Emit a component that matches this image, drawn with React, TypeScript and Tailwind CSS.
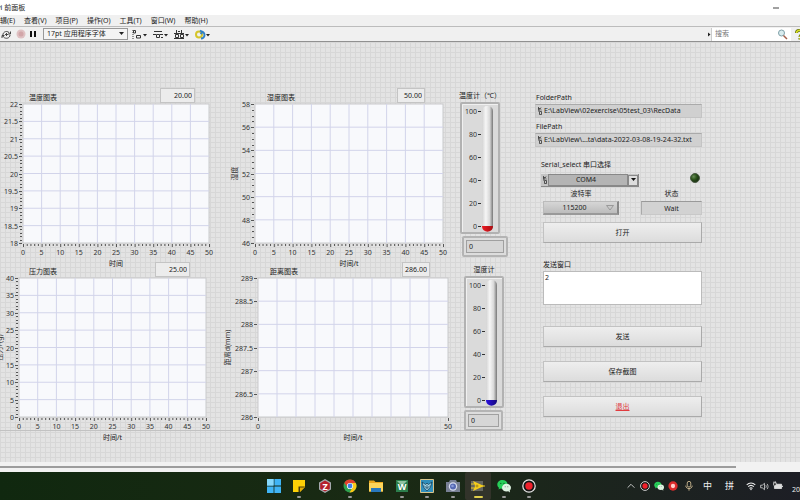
import type { ReactNode } from "react";

type ChartProps = {
  id: string;
  title: string;
  value: string;
  yLabels: string[];
  yMinor: number;
  xLabels: string[];
  xMinor: number;
  xTitle: string;
  yTitle?: string;
  yTitleX?: number;
  className: string;
  titleClass: string;
  valueClass: string;
};

const PLOT_HEIGHT = 139;
const tens = ["0", "5", "10", "15", "20", "25", "30", "35", "40", "45", "50"];

const range = (n: number) => Array.from({ length: n + 1 }, (_, i) => i);

const Chart = (p: ChartProps) => {
  const yCount = p.yLabels.length - 1;
  const xCount = p.xLabels.length - 1;
  return (
    <div className={p.className}>
      <div className="flex h-4 items-start">
        <label htmlFor={p.id} className={`flex-1 pt-1 leading-3 ${p.titleClass}`}>
          {p.title}
        </label>
        <input
          id={p.id}
          readOnly
          defaultValue={p.value}
          className={`h-[15px] border border-[#c4c4c4] bg-[#ececec] pr-[2px] text-right outline-none ${p.valueClass}`}
        />
      </div>
      <svg className="block h-[139px] w-full overflow-visible" fill="#333">
        <rect width="100%" height="100%" fill="#f8f9fc" stroke="#c9cacc" />
        {range(10).slice(1, 10).map((i) => (
          <line key={i} x1={`${i * 10}%`} x2={`${i * 10}%`} y1="0" y2="100%" stroke="#d2d4ea" />
        ))}
        {range(yCount).slice(1, yCount).map((i) => (
          <line key={i} x1="0" x2="100%" y1={`${(i * 100) / yCount}%`} y2={`${(i * 100) / yCount}%`} stroke="#d2d4ea" />
        ))}
        {range(yCount * p.yMinor).map((i) => {
          const y = Math.round((i * PLOT_HEIGHT) / (yCount * p.yMinor));
          return <rect key={i} x={i % p.yMinor ? -3 : -4} y={y} width={i % p.yMinor ? 2 : 3} height="1" fill="#555" />;
        })}
        {range(xCount * p.xMinor).map((i) => (
          <rect
            key={i}
            x={`${(i * 100) / (xCount * p.xMinor)}%`}
            y={PLOT_HEIGHT + 1}
            width="1"
            height={i % p.xMinor ? 2 : 3}
            fill="#555"
          />
        ))}
        {p.yLabels.map((t, i) => (
          <text key={t} x="-5" y={Math.round((i * PLOT_HEIGHT) / yCount) + 3} textAnchor="end">
            {t}
          </text>
        ))}
        {p.xLabels.map((t, i) => (
          <text key={t} x={`${(i * 100) / xCount}%`} y={PLOT_HEIGHT + 12} textAnchor="middle">
            {t}
          </text>
        ))}
        {p.yTitle && (
          <svg x={p.yTitleX} y="50%" overflow="visible">
            <text textAnchor="middle" transform="rotate(-90)">
              {p.yTitle}
            </text>
          </svg>
        )}
      </svg>
      <div className="pt-[15px] text-center leading-3">{p.xTitle}</div>
    </div>
  );
};

const Thermometer = ({ id, label, color, dark }: { id: string; label: string; color: string; dark: string }) => (
  <>
    <label htmlFor={id} className="flex w-10 justify-center leading-3 whitespace-nowrap">
      {label}
    </label>
    <svg width="40" height="132" className="block" fill="#333">
      <defs>
        <linearGradient id={`${id}-tube`}>
          <stop offset="0" stopColor="#d4d4d4" />
          <stop offset="0.35" stopColor="#f6f6f6" />
          <stop offset="0.7" stopColor="#d8d8d8" />
          <stop offset="1" stopColor="#777" />
        </linearGradient>
        <linearGradient id={`${id}-bulb`}>
          <stop offset="0" stopColor={color} />
          <stop offset="1" stopColor={dark} />
        </linearGradient>
      </defs>
      <rect x="1" y="1" width="38" height="130" rx="1" fill="#dadada" stroke="#b2b2b2" strokeWidth="2" />
      <path d="M2.500 130V2.500H38" fill="none" stroke="#f0f0f0" />
      <rect x="22" y="4" width="11" height="125" rx="5" fill={`url(#${id}-tube)`} />
      <path d="M22 124H33C33 131.500 22 131.500 22 124Z" fill={`url(#${id}-bulb)`} />
      {[100, 80, 60, 40, 20, 0].map((n, i) => (
        <g key={n}>
          <text x="17" y={12 + i * 23} textAnchor="end">
            {n}
          </text>
          <rect x="18" y={9 + i * 23} width="3" height="1" />
        </g>
      ))}
    </svg>
  </>
);

const Reading = ({ id, className }: { id: string; className: string }) => (
  <div className={`mt-[2px] rounded-xs border-2 border-[#b4b4b4] bg-[#ddd] p-[2px] ${className}`}>
    <input
      id={id}
      readOnly
      defaultValue="0"
      className="block h-[13px] w-full border border-[#a0a0a0] bg-[#d6d6d6] pl-[2px] outline-none"
    />
  </div>
);

const PathField = ({ id, label, value }: { id: string; label: string; value: string }) => (
  <>
    <label htmlFor={id} className="block pl-px leading-3">
      {label}
    </label>
    <div className="mb-[3px] flex h-[14px] items-center border border-[#c4c4c4] border-t-[#aaa] bg-[#d0d0d0]">
      <PathMark />
      <input id={id} readOnly defaultValue={value} className="min-w-0 flex-1 pl-px outline-none" />
    </div>
  </>
);

const PathMark = () => (
  <svg width="7" height="10" viewBox="0 0 7 10" className="shrink-0" fill="none" stroke="#333">
    <path d="M2.500 1V4.500M2.500 2.500H4M5 1.500L2.500 5.500M3.500 5.500H5.500V8.500H3.500zM5 4.500V3.500" strokeWidth="0.8" />
  </svg>
);

const PanelButton = ({ children, className = "" }: { children: ReactNode; className?: string }) => (
  <button
    type="button"
    className={`block h-[21px] w-full border border-[#c2c2c2] border-r-[#aaa] border-b-[#aaa] bg-linear-to-b from-[#eee] to-[#dcdcdc] leading-3 ${className}`}
  >
    {children}
  </button>
);

const ToolButton = ({ label, className = "", children }: { label: string; className?: string; children: ReactNode }) => (
  <button type="button" aria-label={label} className={`shrink-0 ${className}`}>
    {children}
  </button>
);

const Caret = () => <path d="M11 5h4l-2 2.500z" fill="#222" stroke="none" />;

const TitleBar = () => (
  <header className="flex h-[15px] items-center bg-white">
    <span className="-ml-[3px] flex-1 whitespace-nowrap">vi 前面板</span>
    <button type="button" aria-label="最小化" className="mr-[21px]">
      <svg width="6" height="6" className="block">
        <path d="M0 3h6" stroke="#444" />
      </svg>
    </button>
  </header>
);

const menus = ["编辑(E)", "查看(V)", "项目(P)", "操作(O)", "工具(T)", "窗口(W)", "帮助(H)"];

const MenuBar = () => (
  <nav className="-ml-[7px] flex h-[11px] items-center gap-[9px] whitespace-nowrap">
    {menus.map((m) => (
      <button key={m} type="button">
        {m}
      </button>
    ))}
  </nav>
);

const Toolbar = () => (
  <div className="flex h-4 items-center border-t border-b border-t-[#bcbcbc] border-b-[#909090] bg-[#f0f0f0] pl-px">
    <ToolButton label="连续运行">
      <svg width="11" height="11" viewBox="0 0 11 11" fill="none" stroke="#444">
        <path d="M2 7.500C1 3.500 5 1 8 3.500L9.500 5M9.500 2.500V5H7M9 6C9 9 5 10.500 2.500 8L1.500 6.500M1 9V6.500H3.500" />
        <path d="M4 5.500h3M5.500 4v3" />
      </svg>
    </ToolButton>
    <ToolButton label="中止执行" className="ml-1">
      <svg width="10" height="10" viewBox="0 0 10 10">
        <circle cx="5" cy="5" r="4.500" fill="#dfc1c3" />
        <circle cx="5" cy="5" r="2.500" fill="#d2a6a9" />
      </svg>
    </ToolButton>
    <ToolButton label="暂停" className="ml-1">
      <svg width="6" height="8">
        <path d="M1 1v6M5 1v6" stroke="#111" strokeWidth="2" />
      </svg>
    </ToolButton>
    <div className="relative ml-[7px] shrink-0">
      <select
        aria-label="字体"
        className="block h-3 w-[85px] appearance-none border border-[#999] bg-[#f4f4f4] pl-[3px] leading-[10px] outline-none"
      >
        <option>17pt 应用程序字体</option>
      </select>
      <svg width="5" height="4" className="pointer-events-none absolute top-1 right-1">
        <path d="M0 0h5L2.500 3z" fill="#222" />
      </svg>
    </div>
    <div className="ml-1 flex gap-1">
      <ToolButton label="对齐对象">
        <svg width="17" height="11" viewBox="0 0 17 11" fill="none" stroke="#333">
          <path d="M1 1v9" strokeDasharray="1 1" />
          <path d="M1.500 1.500h2v2.500h-2zM4.500 6.500h4v2.500h-4z" />
          <Caret />
        </svg>
      </ToolButton>
      <ToolButton label="分布对象">
        <svg width="17" height="11" viewBox="0 0 17 11" fill="none" stroke="#333">
          <path d="M1 2.500h8M0 5.500h3M7 5.500h3M3.500 5.500h3v3h-3zM8 8.500h2" />
          <Caret />
        </svg>
      </ToolButton>
      <ToolButton label="调整对象大小">
        <svg width="17" height="11" viewBox="0 0 17 11" fill="none" stroke="#333">
          <path d="M0 4.500h10M0 9.500h10M2.500 1v3M7.500 1v3M4 2.500h2M1.500 5.500h3v3h-3zM6.500 5.500h3v3h-3z" />
          <Caret />
        </svg>
      </ToolButton>
      <ToolButton label="重新排序">
        <svg width="17" height="11" viewBox="0 0 17 11" fill="none">
          <circle cx="4" cy="5.500" r="3" stroke="#d5c52a" strokeWidth="2" />
          <path d="M6 2.500a3.500 3.500 0 0 1 0 7M5 1.500L7.500 3L5.500 5" stroke="#2f7fc4" strokeWidth="2" />
          <Caret />
        </svg>
      </ToolButton>
    </div>
    <span className="flex-1" />
    <svg width="3" height="5">
      <path d="M0 0.500L2.500 2.500L0 4.500z" fill="#222" />
    </svg>
    <div className="flex h-[13px] w-[80px] items-center border-l border-[#ccc] bg-white pr-[3px] pl-[3px]">
      <input aria-label="搜索" placeholder="搜索" className="min-w-0 flex-1 outline-none placeholder:text-[#777]" />
      <svg width="11" height="11" viewBox="0 0 11 11" fill="none">
        <circle cx="4.500" cy="4" r="3" fill="#d9ecef" stroke="#7fa0a8" />
        <path d="M6.500 6.500L10 10" stroke="#a4604c" strokeWidth="1.500" />
      </svg>
    </div>
    <ToolButton label="显示即时帮助" className="ml-1 w-[5px] overflow-hidden">
      <svg width="10" height="11" viewBox="0 0 10 11" fill="none">
        <path d="M1.500 4C1.500 0.500 8 0.500 8 3.500C8 5.500 5 5.500 5 8M5 9v1.500" stroke="#5d6a10" strokeWidth="3" />
        <path d="M1.500 4C1.500 0.500 8 0.500 8 3.500C8 5.500 5 5.500 5 8M5 9v1.500" stroke="#d9e021" strokeWidth="1.500" />
      </svg>
    </ToolButton>
  </div>
);

const Controls = () => (
  <form className="pt-1" onSubmit={(e) => e.preventDefault()}>
    <div className="pl-[5px]">
      <PathField id="folder" label="FolderPath" value="E:\LabView\02exercise\05test_03\RecData" />
      <PathField id="file" label="FilePath" value="E:\LabView\...ta\data-2022-03-08-19-24-32.txt" />
    </div>
    <div className="mt-3 flex items-end justify-between pl-[11px]">
      <div>
        <label htmlFor="serial" className="mb-[3px] block leading-3">
          Serial_select 串口选择
        </label>
        <div className="relative flex h-[13px] w-[98px] items-center border-r border-b border-[#888] bg-[#c4c4c4]">
          <PathMark />
          <select
            id="serial"
            className="h-3 flex-1 appearance-none border border-[#888] bg-[#b4b4b4] pr-1 text-center leading-[10px] outline-none"
          >
            <option>COM4</option>
          </select>
          <span className="flex h-[11px] w-[10px] items-center justify-center border border-[#888] bg-[#ddd]">
            <svg width="5" height="4">
              <path d="M0 0h5L2.500 3z" fill="#111" />
            </svg>
          </span>
        </div>
      </div>
      <svg width="10" height="10" viewBox="0 0 10 10" className="mr-[2px] mb-1">
        <defs>
          <radialGradient id="led" cx="0.35" cy="0.35">
            <stop offset="0" stopColor="#6a8a5a" />
            <stop offset="0.6" stopColor="#2f5a1e" />
            <stop offset="1" stopColor="#203a16" />
          </radialGradient>
        </defs>
        <circle cx="5" cy="5" r="4.500" fill="url(#led)" stroke="#4a5a44" />
      </svg>
    </div>
    <div className="mt-px pl-[13px]">
      <div className="flex justify-between">
        <div className="w-[76px]">
          <label htmlFor="baud" className="mb-px block text-center leading-3">
            波特率
          </label>
          <div className="relative">
            <select
              id="baud"
              className="block h-[14px] w-full appearance-none border border-[#bbb] border-r-2 border-b-2 border-r-[#888] border-b-[#999] bg-linear-to-b from-[#d6d6d6] to-[#bcbcbc] pr-3 text-center leading-[11px] outline-none"
            >
              <option>115200</option>
            </select>
            <svg width="8" height="6" className="pointer-events-none absolute top-1 right-[5px]">
              <path d="M0.500 0.500h7L4 5z" fill="#c8c8c8" stroke="#999" />
            </svg>
          </div>
        </div>
        <div className="w-[61px]">
          <label htmlFor="state" className="mb-px block text-center leading-3">
            状态
          </label>
          <input
            id="state"
            readOnly
            defaultValue="Wait"
            className="block h-[14px] w-full border border-[#c8c8c8] border-t-[#999] border-l-[#aaa] bg-[#d2d2d2] text-center outline-none"
          />
        </div>
      </div>
      <PanelButton className="mt-[7px]">打开</PanelButton>
      <label htmlFor="send" className="mt-4 block leading-3">
        发送窗口
      </label>
      <textarea
        id="send"
        defaultValue="2"
        className="block h-[34px] w-full resize-none border border-[#bbb] bg-white pt-px pl-px leading-[9px] outline-none"
      />
      <PanelButton className="mt-[21px]">发送</PanelButton>
      <PanelButton className="mt-[14px]">保存截图</PanelButton>
      <PanelButton className="mt-[14px] text-[#e03a3e] underline">退出</PanelButton>
    </div>
  </form>
);

const FrontPanel = () => (
  <main className="grid flex-1 grid-cols-[223fr_232fr_75fr_172fr_98fr] bg-[#e3e3e3] bg-[linear-gradient(#c2c2c2,#c2c2c2),linear-gradient(to_right,#d7d7d7_1px,transparent_1px),linear-gradient(#d7d7d7_1px,transparent_1px)] bg-size-[100%_1px,5px_5px,5px_5px] bg-position-[0_388px,0_0,0_0] pt-[46px] [background-repeat:no-repeat,repeat,repeat]">
    <section>
      <Chart
        id="temp"
        title="温度图表"
        value="20.00"
        yLabels={["22", "21.5", "21", "20.5", "20", "19.5", "19", "18.5", "18"]}
        yMinor={5}
        xLabels={tens}
        xMinor={5}
        xTitle="时间"
        className="pr-[14px] pl-[23px]"
        titleClass="pl-[6px]"
        valueClass="mr-[14px] w-[35px]"
      />
      <Chart
        id="pressure"
        title="压力图表"
        value="25.00"
        yLabels={["40", "35", "30", "25", "20", "15", "10", "5", "0"]}
        yMinor={5}
        xLabels={tens}
        xMinor={5}
        xTitle="时间/t"
        yTitle="压力F(g)"
        yTitleX={-17}
        className="-mt-2 pr-[17px] pl-[19px]"
        titleClass="pl-[10px]"
        valueClass="mr-4 w-[35px]"
      />
    </section>
    <section>
      <Chart
        id="humidity"
        title="湿度图表"
        value="50.00"
        yLabels={["58", "56", "54", "52", "50", "48", "46"]}
        yMinor={4}
        xLabels={tens}
        xMinor={5}
        xTitle="时间/t"
        yTitle="湿度"
        yTitleX={-18}
        className="pr-3 pl-8"
        titleClass="pl-3"
        valueClass="mr-[18px] w-7"
      />
      <Chart
        id="distance"
        title="距离图表"
        value="286.00"
        yLabels={["289", "288.5", "288", "287.5", "287", "286.5", "286"]}
        yMinor={1}
        xLabels={["0", "50"]}
        xMinor={1}
        xTitle="时间/t"
        yTitle="距离d(mm)"
        yTitleX={-28}
        className="-mt-2 pr-[7px] pl-[35px]"
        titleClass="pl-3"
        valueClass="mr-[18px] w-7"
      />
    </section>
    <section className="pt-[2px] pl-[5px]">
      <Thermometer id="t1" label="温度计（℃）" color="#ee1c24" dark="#a80d12" />
      <Reading id="t1" className="ml-[2px] w-[46px]" />
      <div className="mt-[7px] pl-1">
        <Thermometer id="t2" label="湿度计" color="#2a10e0" dark="#15087c" />
        <Reading id="t2" className="w-[39px]" />
      </div>
    </section>
    <Controls />
  </main>
);

const apps = [
  {
    name: "开始",
    icon: (
      <>
        <path d="M0 0h6.600v6.600H0zM7.400 0H14v6.600H7.400zM0 7.400h6.600V14H0zM7.400 7.400H14V14H7.400z" fill="#3fb4f5" />
        <path d="M0 0h6.600v6.600H0z" fill="#86d8fb" />
      </>
    ),
  },
  {
    name: "便笺",
    open: true,
    icon: (
      <>
        <path d="M1 1h12v7L8 13H1z" fill="#fdd006" />
        <path d="M6.500 7.500H13L8 13H6.500z" fill="#4a3c0c" />
        <path d="M8 8.500h4.500L8 13z" fill="#e0ae06" />
      </>
    ),
  },
  {
    name: "Zotero",
    icon: (
      <>
        <path d="M7 0L13 3.500V10.500L7 14L1 10.500V3.500z" fill="#a5a9ad" />
        <path d="M7 1.500L11.800 4.200V9.800L7 12.500L2.200 9.800V4.200z" fill="#b5202b" />
        <text x="7" y="10.500" fontSize="9" fontWeight="700" textAnchor="middle" fill="#fff">
          Z
        </text>
      </>
    ),
  },
  {
    name: "Chrome",
    open: true,
    icon: (
      <>
        <circle cx="7" cy="7" r="6.500" fill="#2fa04e" />
        <path d="M1.300 4A6.500 6.500 0 0 1 12.700 4L7 4.200L4.500 8z" fill="#e2402f" />
        <path d="M12.700 4A6.500 6.500 0 0 1 6.500 13.500L9.700 8.500L9 4z" fill="#fbc816" />
        <circle cx="7" cy="7" r="3.100" fill="#fff" />
        <circle cx="7" cy="7" r="2.400" fill="#3f7ee8" />
      </>
    ),
  },
  {
    name: "文件资源管理器",
    icon: (
      <>
        <path d="M0 1.500h5l1.500 1.500H14v9.500H0z" fill="#e8a51c" />
        <path d="M0 4h14v8.500H0z" fill="#fcd45a" />
        <path d="M2 9h10v4H2z" fill="#2878bd" />
      </>
    ),
  },
  {
    name: "Keil",
    open: true,
    icon: (
      <>
        <path d="M1 1h12v12H1z" fill="#2c7e4c" />
        <path d="M2 2h10l-5 5z" fill="#8fc3a2" />
        <text x="7" y="10.500" fontSize="9" fontWeight="700" textAnchor="middle" fill="#fff">
          W
        </text>
      </>
    ),
  },
  {
    name: "串口助手",
    open: true,
    icon: (
      <>
        <path d="M0.500 0.500h13v13H0.500z" fill="#2f8fbc" stroke="#d8c58c" />
        <path d="M2 3L5.500 5.500L7 4L8.500 5.500L12 3L10.500 8L7 12L3.500 8z" fill="#a8dced" stroke="#123e58" strokeWidth="0.8" />
        <path d="M4 6.500L7 9.500L10 6.500M7 5.500V9.500" fill="none" stroke="#123e58" strokeWidth="0.8" />
      </>
    ),
  },
  {
    name: "相机",
    open: true,
    icon: (
      <>
        <path d="M0 3h3l1-2h6l1 2h3v10H0z" fill="#788094" />
        <circle cx="7" cy="7.500" r="4.200" fill="#d8dcf0" />
        <circle cx="7" cy="7.500" r="3" fill="#5669b4" />
        <circle cx="6.500" cy="7" r="1.300" fill="#8b9cda" />
      </>
    ),
  },
  {
    name: "LabVIEW",
    open: true,
    active: true,
    icon: (
      <>
        <path d="M0 2h12v10H0z" fill="#676760" />
        <path d="M0 5h3M0 9h3M10 7h4" stroke="#e9c925" />
        <path d="M2 2L13 7L2 12L4 7z" fill="#f6cf1b" />
        <path d="M4.500 7h3M6 5.500v3" stroke="#a58618" />
      </>
    ),
  },
  { name: "微信", open: true, icon: <WeChatShape /> },
  { name: "录屏", open: true, icon: <RecordShape /> },
];

function WeChatShape() {
  return (
    <>
      <path d="M5.500 1C2.500 1 0.300 3 0.300 5.500C0.300 7 1 8 2 8.800L1.500 10.500L3.500 9.500C9 10.500 10.700 7.500 10.500 5C10.300 2.500 8 1 5.500 1z" fill="#27ce59" />
      <ellipse cx="9.500" cy="8.700" rx="4.500" ry="3.900" fill="#dff3e2" />
      <path d="M11 12l2 1.500l-0.300-2.500z" fill="#dff3e2" />
      <circle cx="3.800" cy="4.400" r="0.600" fill="#0b5723" />
      <circle cx="7" cy="4.400" r="0.600" fill="#0b5723" />
      <circle cx="8.200" cy="7.800" r="0.500" fill="#666" />
      <circle cx="10.800" cy="7.800" r="0.500" fill="#666" />
    </>
  );
}

function RecordShape() {
  return (
    <>
      <circle cx="7" cy="7" r="6.200" fill="#161616" stroke="#e8e8e8" strokeWidth="1.200" />
      <circle cx="7" cy="7" r="3.700" fill="#f0202b" />
    </>
  );
}

const TrayIcon = ({ label, size = 10, className = "", children }: { label: string; size?: number; className?: string; children: ReactNode }) => (
  <button type="button" aria-label={label} className={className}>
    <svg width={size} height={size} viewBox="0 0 14 14" fill="none" stroke="none" className="block">
      {children}
    </svg>
  </button>
);

const Taskbar = () => (
  <footer className="grid h-7 grid-cols-[1fr_auto_1fr] bg-linear-to-r from-[#10280f] via-[#1a2a14] to-[#1d1e25] text-[#eee]">
    <span />
    <div className="ml-[3px] flex w-[281px]">
      {apps.map((a) => (
        <button
          key={a.name}
          type="button"
          aria-label={a.name}
          className={`flex flex-1 flex-col items-center rounded-xs pt-[7px] ${a.active ? "bg-[#32332a]" : ""}`}
        >
          <svg width="14" height="14" viewBox="0 0 14 14">
            {a.icon}
          </svg>
          {a.open && (
            <span className={`mt-[3px] h-[2px] rounded-full ${a.active ? "w-[9px] bg-[#e0cf4c]" : "w-1 bg-[#999]"}`} />
          )}
        </button>
      ))}
    </div>
    <div className="flex items-center justify-end overflow-hidden">
      <TrayIcon label="显示隐藏的图标" size={8}>
        <path d="M1 10L7 4L13 10" stroke="#ddd" strokeWidth="1.500" />
      </TrayIcon>
      <TrayIcon label="录屏" className="ml-[5px]">
        <RecordShape />
      </TrayIcon>
      <TrayIcon label="微信" className="ml-1">
        <WeChatShape />
      </TrayIcon>
      <TrayIcon label="网易云音乐" className="ml-1">
        <circle cx="7" cy="7" r="6.500" fill="#dc2b2c" />
        <circle cx="7" cy="7" r="3" fill="#ffd0cd" />
      </TrayIcon>
      <TrayIcon label="麦克风" className="ml-[6px]">
        <rect x="4.500" y="0.500" width="5" height="8" rx="2.500" stroke="#d8c39a" strokeWidth="1.200" />
        <path d="M2.500 6.500C2.500 12 11.500 12 11.500 6.500M7 10.500V13.500" stroke="#d8c39a" strokeWidth="1.200" />
      </TrayIcon>
      <button type="button" className="ml-[9px] text-[9px]">
        中
      </button>
      <button type="button" className="ml-[13px] text-[9px]">
        拼
      </button>
      <TrayIcon label="网络" className="ml-3">
        <path d="M1 5.500C4.500 2 9.500 2 13 5.500M3 8C5.500 5.500 8.500 5.500 11 8M5 10.500C6.500 9 7.500 9 9 10.500" stroke="#eee" strokeWidth="1.500" />
        <circle cx="7" cy="12" r="1" fill="#eee" />
      </TrayIcon>
      <TrayIcon label="音量" size={9} className="ml-1">
        <path d="M1 5h2.500L7 2v10L3.500 9H1zM9 5C10 6 10 8 9 9M11 3C13 5 13 9 11 11" stroke="#ddd" strokeWidth="1.200" />
      </TrayIcon>
      <TrayIcon label="电池" className="ml-1">
        <path d="M2 4.500h10v6H2z" fill="#ddd" stroke="#eee" />
        <path d="M13 6.500v2" stroke="#eee" strokeWidth="1.500" />
        <path d="M0.500 2.500h4v3L2.500 7L0.500 5.500zM1.500 0.500v2M3.500 0.500v2" stroke="#eee" fill="#333" />
      </TrayIcon>
      <time className="mt-2 ml-[9px] w-2 whitespace-nowrap">2022</time>
    </div>
  </footer>
);

const App = () => (
  <div className="flex min-h-screen flex-col overflow-hidden bg-[#f0f0f0] font-['Noto_Sans','Noto_Sans_CJK_SC',sans-serif] text-[7px] leading-3 text-[#222]">
    <TitleBar />
    <MenuBar />
    <Toolbar />
    <FrontPanel />
    <div className="h-[10px] bg-[#f2f2f2] pt-1">
      <div className="h-[2px] w-[92%] bg-[#9d9d9d]" />
    </div>
    <Taskbar />
  </div>
);

export default App;
